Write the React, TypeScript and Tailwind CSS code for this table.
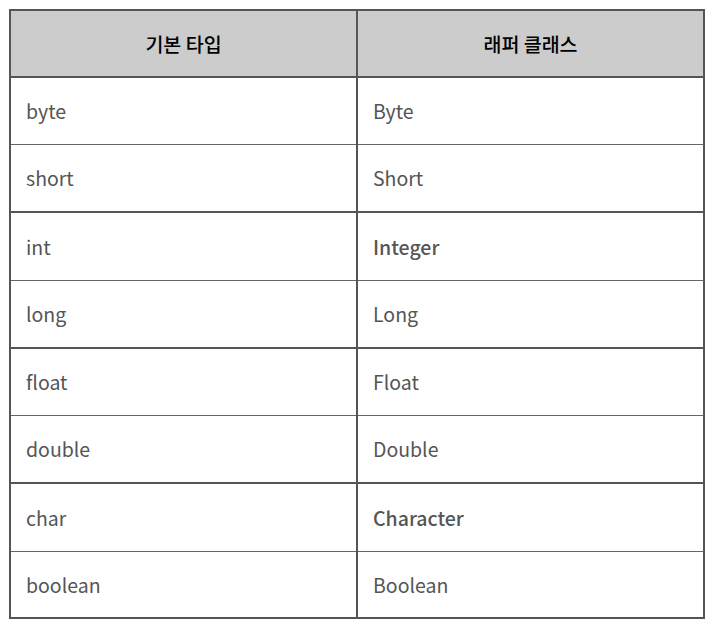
const rows: { primitive: string; wrapper: string; strong?: boolean; h: string }[] = [
  { primitive: "byte", wrapper: "Byte", h: "h-[67px]" },
  { primitive: "short", wrapper: "Short", h: "h-[68px]" },
  { primitive: "int", wrapper: "Integer", strong: true, h: "h-[68px]" },
  { primitive: "long", wrapper: "Long", h: "h-[68px]" },
  { primitive: "float", wrapper: "Float", h: "h-[67px]" },
  { primitive: "double", wrapper: "Double", h: "h-[68px]" },
  { primitive: "char", wrapper: "Character", strong: true, h: "h-[68px]" },
  { primitive: "boolean", wrapper: "Boolean", h: "h-[67px]" }
]

export default function App() {
  return (
    <div
      className="min-h-[625px] bg-white pl-[9px] pt-[9px]"
      style={{ fontFamily: '"Noto Sans CJK KR", "Noto Sans", sans-serif' }}
    >
      <table className="w-[696px] table-fixed border-collapse border-2 border-[#555]">
        <thead>
          <tr className="h-[67px] bg-[#cccccc]">
            <th className="border-2 border-[#555] text-center text-[19.5px] font-medium text-black">기본 타입</th>
            <th className="border-2 border-[#555] text-center text-[19.5px] font-medium text-black">래퍼 클래스</th>
          </tr>
        </thead>
        <tbody>
          {rows.map((row, i) => (
            <tr
              key={row.primitive}
              className={
                i % 2 === 0
                  ? `${row.h} border-b border-[#666]`
                  : `${row.h} border-b-2 border-[#555]`
              }
            >
              <td className="border-r-2 border-[#555] pl-[15px] text-[19.5px] text-[#555]">{row.primitive}</td>
              <td
                className={
                  row.strong
                    ? "pl-[15px] text-[19.5px] font-medium text-[#555]"
                    : "pl-[15px] text-[19.5px] text-[#555]"
                }
              >
                {row.wrapper}
              </td>
            </tr>
          ))}
        </tbody>
      </table>
    </div>
  )
}
